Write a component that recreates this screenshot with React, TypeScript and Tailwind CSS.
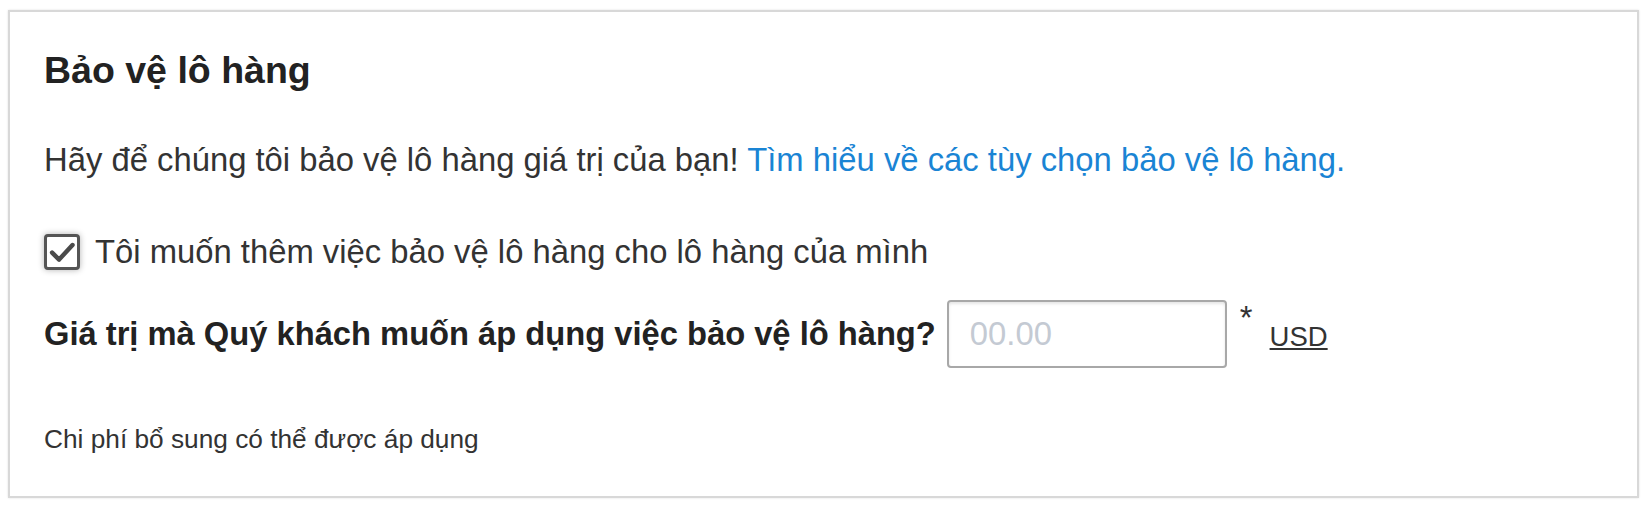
export default function App() {
  return (
    <div className="min-h-screen bg-white pl-[8px] pr-[10px] pt-[10px] font-['Liberation_Sans',Arial,sans-serif] text-[#333]">
      <div className="border-2 border-[#d8d8d8] bg-white px-[34px] pb-[41px] pt-[36px] shadow-[0_0_2px_rgba(0,0,0,0.12)]">
        <h2 className="text-[37.5px] font-bold leading-[44px] text-[#222]">
          Bảo vệ lô hàng
        </h2>
        <p className="mt-[48px] text-[32.8px] leading-[40px]">
          Hãy để chúng tôi bảo vệ lô hàng giá trị của bạn!{" "}
          <a href="#" className="text-[#1a84d4]">
            Tìm hiểu về các tùy chọn bảo vệ lô hàng.
          </a>
        </p>
        <label className="mt-[52px] flex h-[40px] items-center gap-[15px]">
          <span className="flex h-[36px] w-[36px] items-center justify-center rounded-[4px] border-[3px] border-[#555] bg-white shadow-[0_0_6px_rgba(0,0,0,0.3)]">
            <svg viewBox="0 0 24 24" className="h-[28px] w-[28px]">
              <path
                d="M3.5 12.5 L9.5 18.5 L21 6"
                fill="none"
                stroke="#4a4a4a"
                strokeWidth="3.8"
                strokeLinecap="round"
                strokeLinejoin="round"
              />
            </svg>
          </span>
          <span className="text-[32.8px] leading-[40px]">
            Tôi muốn thêm việc bảo vệ lô hàng cho lô hàng của mình
          </span>
        </label>
        <div className="mt-[28px] flex items-center">
          <span className="text-[32.7px] font-bold leading-[40px] text-[#222]">
            Giá trị mà Quý khách muốn áp dụng việc bảo vệ lô hàng?
          </span>
          <input
            type="text"
            placeholder="00.00"
            className="ml-[11px] h-[68px] w-[280px] rounded-[4px] border-2 border-[#a8a8a8] bg-white pl-[21px] text-[32.8px] text-[#333] shadow-[inset_0_2px_3px_rgba(0,0,0,0.1)] outline-none placeholder:text-[#c4cad3]"
          />
          <span className="ml-[13px] self-start pt-[2px] text-[32.8px] leading-[32px]">
            *
          </span>
          <a
            href="#"
            className="ml-[17px] mt-[6px] text-[27.5px] leading-[32px] text-[#333] underline"
          >
            USD
          </a>
        </div>
        <p className="mt-[55px] text-[26.25px] leading-[32px]">
          Chi phí bổ sung có thể được áp dụng
        </p>
      </div>
    </div>
  );
}
